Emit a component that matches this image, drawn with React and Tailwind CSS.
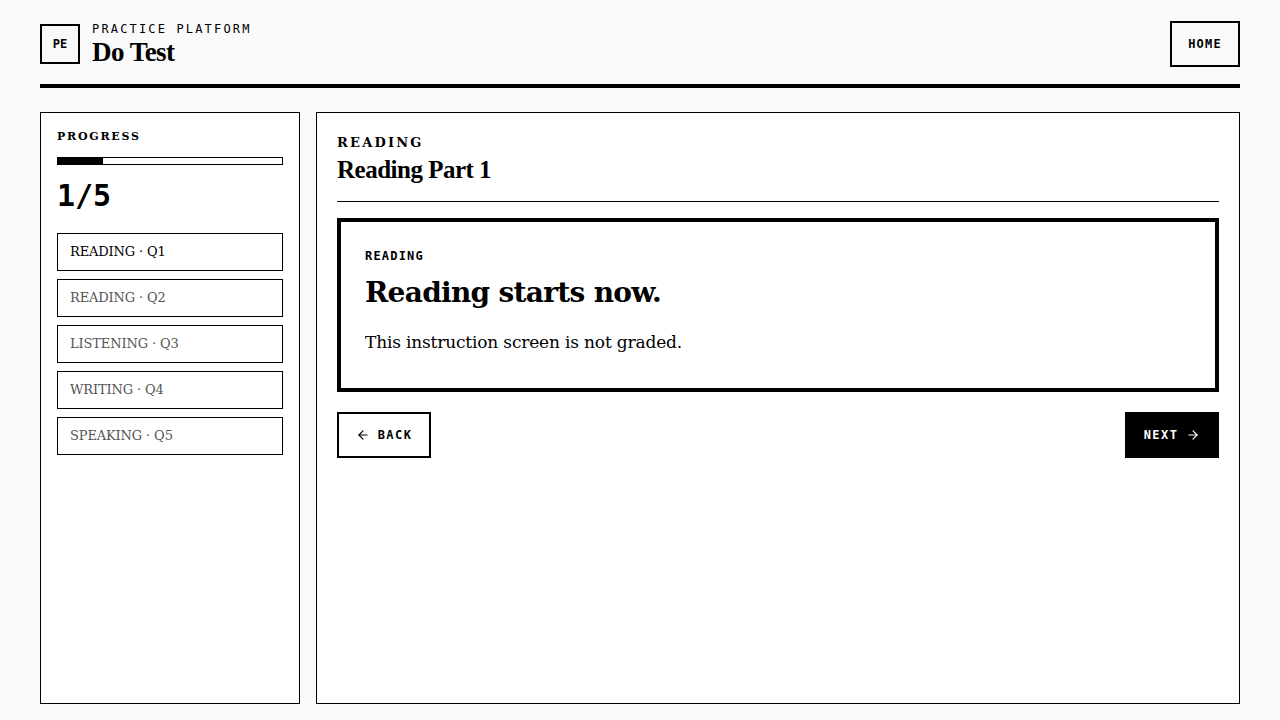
import { ArrowLeft, ArrowRight } from "lucide-react";

const mono = "font-['DejaVu_Sans_Mono','Liberation_Mono',monospace]";
const serif = "font-['DejaVu_Serif','Liberation_Serif',serif]";
const display = "font-['Liberation_Serif','DejaVu_Serif',serif]";

const items = [
  { label: "READING · Q1", active: true },
  { label: "READING · Q2" },
  { label: "LISTENING · Q3" },
  { label: "WRITING · Q4" },
  { label: "SPEAKING · Q5" },
];

function Header() {
  return (
    <header className="flex items-center justify-between pt-[21px] pb-[17px] border-b-4 border-black">
      <div className="flex items-center gap-3">
        <div
          className={`w-10 h-10 border-2 border-black flex items-center justify-center text-[12px] font-bold ${mono}`}
        >
          PE
        </div>
        <div className="flex flex-col">
          <span className={`text-[12px] tracking-[0.18em] leading-4 ${mono}`}>
            PRACTICE PLATFORM
          </span>
          <span className={`text-[27px] font-bold leading-[30px] tracking-[-0.02em] ${display}`}>
            Do Test
          </span>
        </div>
      </div>
      <button
        className={`w-[70px] h-[46px] border-2 border-black text-[12px] font-bold tracking-[0.1em] ${mono}`}
      >
        HOME
      </button>
    </header>
  );
}

function Sidebar() {
  return (
    <aside className="w-[260px] shrink-0 border border-black bg-white px-4 pt-4">
      <div className={`text-[11px] font-bold tracking-[0.16em] leading-4 ${serif}`}>
        PROGRESS
      </div>
      <div className="mt-[12px] h-2 border border-black">
        <div className="h-full w-[20%] bg-black" />
      </div>
      <div className={`mt-[13px] text-[30px] font-bold leading-9 ${mono}`}>1/5</div>
      <div className="mt-[19px] flex flex-col gap-2">
        {items.map((it) => (
          <div
            key={it.label}
            className={`h-[38px] border border-black px-3 flex items-center text-[13px] tracking-[-0.01em] ${serif} ${
              it.active ? "text-black" : "text-[#555]"
            }`}
          >
            {it.label}
          </div>
        ))}
      </div>
    </aside>
  );
}

function Main() {
  return (
    <main className="flex-1 border border-black bg-white px-5 pt-[22px]">
      <div className={`text-[13px] font-bold tracking-[0.17em] leading-4 ${serif}`}>
        READING
      </div>
      <h1 className={`mt-[3px] text-[25px] font-bold leading-8 tracking-[-0.02em] ${display}`}>
        Reading Part 1
      </h1>
      <div className="mt-[15px] border-t border-black" />
      <section className="mt-4 border-4 border-black px-6 pt-[26px] pb-[32px]">
        <div className={`text-[12px] font-semibold tracking-[0.1em] leading-4 ${mono}`}>
          READING
        </div>
        <h2 className={`mt-[11px] text-[28px] font-bold leading-9 tracking-[-0.025em] ${serif}`}>
          Reading starts now.
        </h2>
        <p className={`mt-[17px] text-[17px] leading-7 tracking-[-0.01em] ${serif}`}>
          This instruction screen is not graded.
        </p>
      </section>
      <div className="mt-5 flex justify-between">
        <button
          className={`h-[46px] w-[94px] border-2 border-black flex items-center justify-center gap-2 text-[12px] font-bold tracking-[0.12em] ${mono}`}
        >
          <ArrowLeft size={14} strokeWidth={2} />
          BACK
        </button>
        <button
          className={`h-[46px] w-[94px] bg-black text-white flex items-center justify-center gap-2 text-[12px] font-bold tracking-[0.12em] ${mono}`}
        >
          NEXT
          <ArrowRight size={14} strokeWidth={2} />
        </button>
      </div>
    </main>
  );
}

export default function App() {
  return (
    <div className="min-h-screen bg-[#fafafa] text-black px-10 pb-4">
      <Header />
      <div className="mt-6 flex gap-4 h-[592px]">
        <Sidebar />
        <Main />
      </div>
    </div>
  );
}
